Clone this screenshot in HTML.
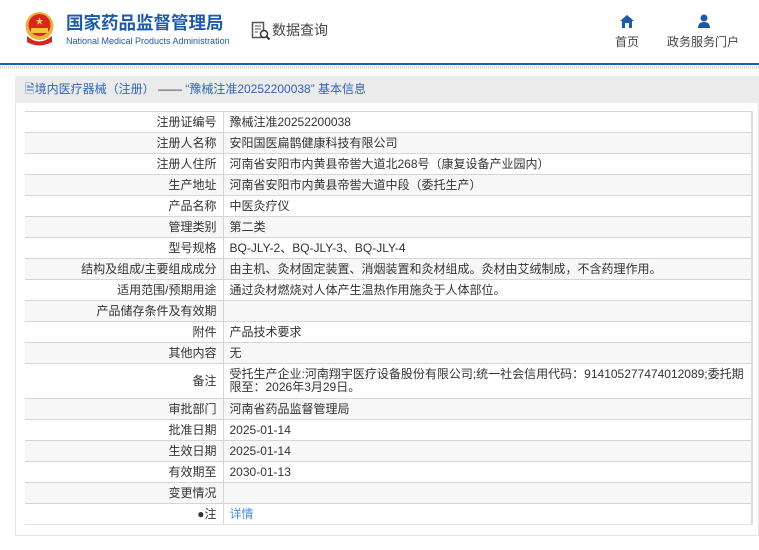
<!DOCTYPE html>
<html><head><meta charset="utf-8"><style>
*{margin:0;padding:0;box-sizing:border-box}
body{width:759px;height:550px;background:#fff;font-family:"Liberation Sans","Noto Sans CJK SC",sans-serif;font-size:12px;color:#333;position:relative;overflow:hidden}
.hdr{position:absolute;left:0;top:0;width:759px;height:65px;border-bottom:2px solid #1a5eaf}
.dots{position:absolute;left:0;top:66px;width:759px;height:3px;background:repeating-linear-gradient(90deg,#cfd6e0 0 1px,#fff 1px 2px)}
.t1{position:absolute;left:66px;top:11px;font-size:17.5px;line-height:24px;font-weight:bold;color:#1d5aa8}
.t2{position:absolute;left:66px;top:36px;font-size:9px;line-height:10px;color:#1d5aa8;white-space:nowrap}
.sq{position:absolute;top:20px;font-size:14px;color:#444}
.nav{position:absolute;top:33px;font-size:12px;color:#444}
.panel{position:absolute;left:15px;top:76px;width:744px;height:460px;border:1px solid #e5e5e5;background:#fff}
.bar{position:absolute;left:15px;top:76px;width:744px;height:27px;background:#ebebeb;color:#2f63b5;font-size:12px;line-height:27px;padding-left:10px}
table{position:absolute;left:25px;top:111px;width:728px;border-collapse:collapse;border-right:2px solid #ddd}
td{border-top:1px solid #d6d6d6;height:21px;padding:0 6px;line-height:14px;font-size:12px;color:#333}
td.l{width:198px;text-align:right;border-right:1px solid #d6d6d6;padding-right:6px}
tr:nth-child(even) td{background:#f7f7f7}
tr:last-child td{border-bottom:1px solid #e5e5e5}
</style></head><body>
<div class="hdr"></div><div class="dots"></div>
<svg style="position:absolute;left:23px;top:11px" width="33" height="35" viewBox="0 0 33 35"><circle cx="16.5" cy="15" r="14" fill="#e8b33a"/><circle cx="16.5" cy="14" r="11" fill="#d9251d"/><rect x="8" y="17" width="17" height="5" fill="#f0c040"/><path d="M4 25 Q16 36 29 25 L29 31 Q16 38 4 31Z" fill="#d9251d"/><polygon points="16.5,6 17.5,9 20.5,9 18,10.8 19,13.8 16.5,12 14,13.8 15,10.8 12.5,9 15.5,9" fill="#f5d04a"/></svg>
<div class="t1">国家药品监督管理局</div>
<div class="t2">National Medical Products Administration</div>
<svg style="position:absolute;left:251px;top:21px" width="20" height="20" viewBox="0 0 20 20"><rect x="1.5" y="1.5" width="11" height="15" fill="none" stroke="#555" stroke-width="1.5"/><path d="M4 5h6M4 8h6M4 11h3" stroke="#555"/><circle cx="13" cy="13" r="3.5" fill="#fff" stroke="#333" stroke-width="1.5"/><path d="M15.5 15.5l3 3" stroke="#333" stroke-width="2"/></svg>
<div class="sq" style="left:272px">数据查询</div>
<svg style="position:absolute;left:620px;top:15px" width="14" height="13" viewBox="0 0 14 13"><path d="M7 0L14 6H12V13H9V8H5V13H2V6H0Z" fill="#1d5aa8"/></svg>
<svg style="position:absolute;left:697px;top:14px" width="14" height="14" viewBox="0 0 14 14"><circle cx="7" cy="4" r="3.5" fill="#1d5aa8"/><path d="M1 14Q1 8 7 8Q13 8 13 14Z" fill="#1d5aa8"/></svg>
<div class="nav" style="left:615px">首页</div>
<div class="nav" style="left:667px">政务服务门户</div>
<div class="panel"></div>
<div class="bar">🗎境内医疗器械（注册） <span style="color:#333">——</span>  “豫械注准20252200038” 基本信息</div>
<table>
<tr><td class="l">注册证编号</td><td>豫械注准20252200038</td></tr>
<tr><td class="l">注册人名称</td><td>安阳国医扁鹊健康科技有限公司</td></tr>
<tr><td class="l">注册人住所</td><td>河南省安阳市内黄县帝喾大道北268号（康复设备产业园内）</td></tr>
<tr><td class="l">生产地址</td><td>河南省安阳市内黄县帝喾大道中段（委托生产）</td></tr>
<tr><td class="l">产品名称</td><td>中医灸疗仪</td></tr>
<tr><td class="l">管理类别</td><td>第二类</td></tr>
<tr><td class="l">型号规格</td><td>BQ-JLY-2、BQ-JLY-3、BQ-JLY-4</td></tr>
<tr><td class="l">结构及组成/主要组成成分</td><td>由主机、灸材固定装置、消烟装置和灸材组成。灸材由艾绒制成，不含药理作用。</td></tr>
<tr><td class="l">适用范围/预期用途</td><td>通过灸材燃烧对人体产生温热作用施灸于人体部位。</td></tr>
<tr><td class="l">产品储存条件及有效期</td><td></td></tr>
<tr><td class="l">附件</td><td>产品技术要求</td></tr>
<tr><td class="l">其他内容</td><td>无</td></tr>
<tr><td class="l" style="height:35px">备注</td><td style="height:35px;line-height:13px">受托生产企业:河南翔宇医疗设备股份有限公司;统一社会信用代码：914105277474012089;委托期限至：2026年3月29日。</td></tr>
<tr><td class="l">审批部门</td><td>河南省药品监督管理局</td></tr>
<tr><td class="l">批准日期</td><td>2025-01-14</td></tr>
<tr><td class="l">生效日期</td><td>2025-01-14</td></tr>
<tr><td class="l">有效期至</td><td>2030-01-13</td></tr>
<tr><td class="l">变更情况</td><td></td></tr>
<tr><td class="l">●注</td><td style="color:#4a8ee0">详情</td></tr>
</table>
</body></html>
